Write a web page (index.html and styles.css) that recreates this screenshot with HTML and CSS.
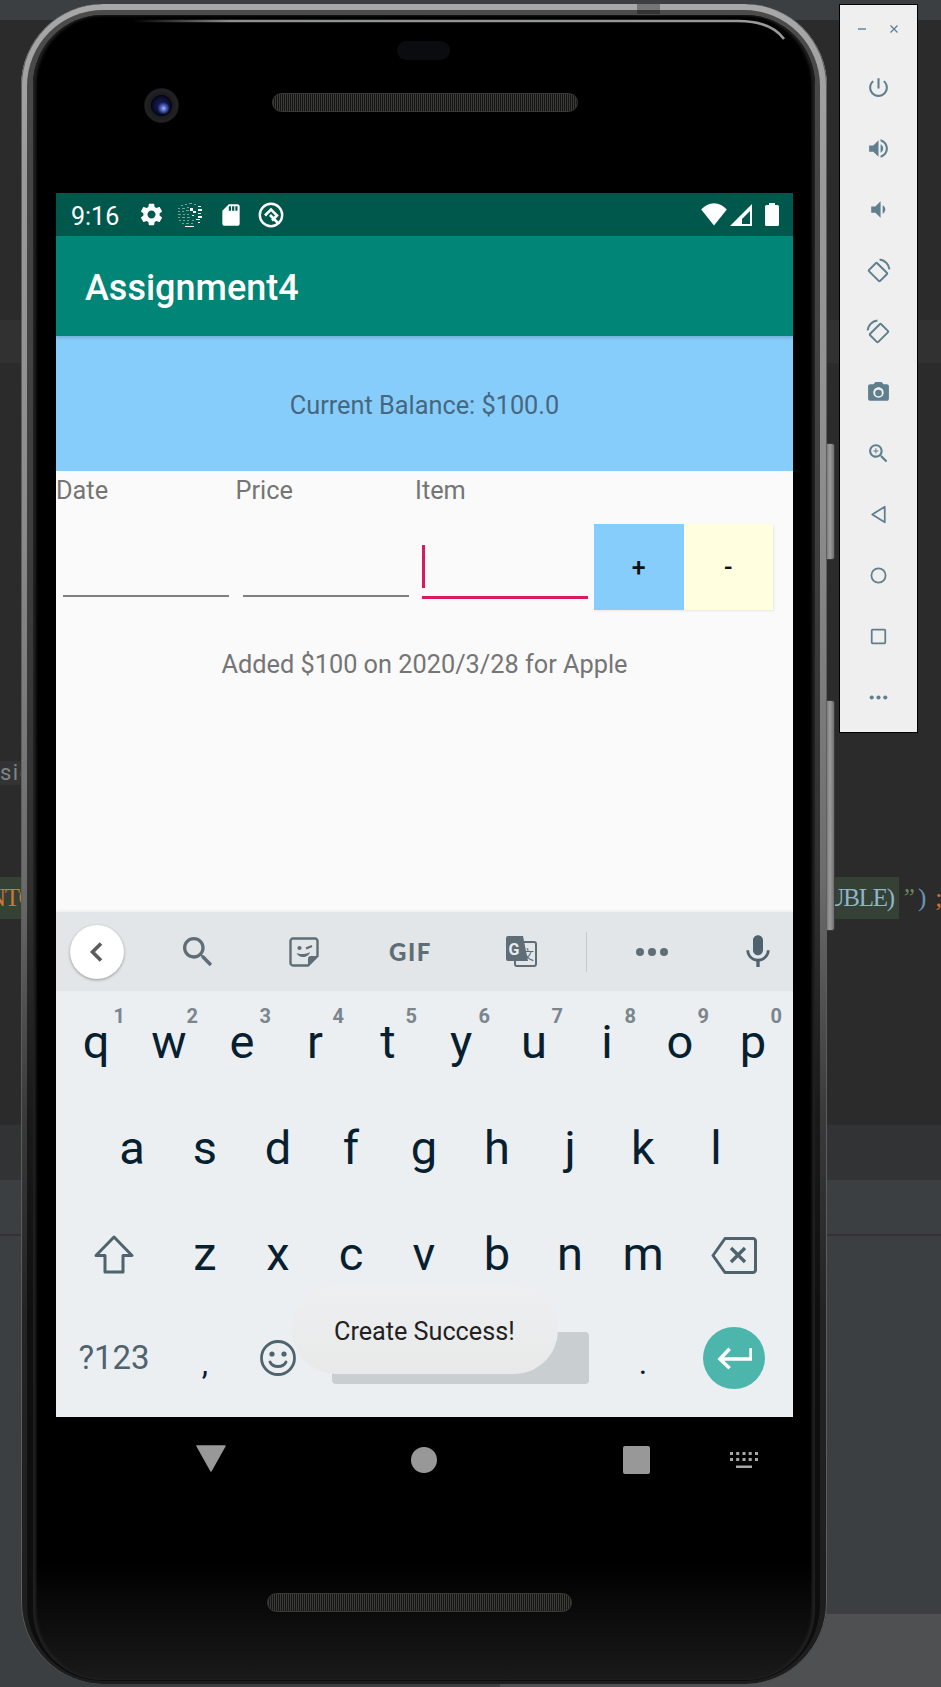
FILE: index.html
```html
<!DOCTYPE html>
<html lang="en">
<head>
<meta charset="utf-8">
<title>Assignment4</title>
<link rel="stylesheet" href="styles.css">
</head>
<body>
<div class="ide">
  <div class="band band-top"></div>
  <div class="band band-a"></div>
  <div class="band band-tabs"></div>
  <div class="band band-b"></div>
  <div class="band band-sic"><span class="sic">sic</span></div>
  <div class="band band-c"></div>
  <div class="band band-code">
    <div class="code-hl"><span class="orange left-code">NTO</span><span class="blue-code">UBLE)</span></div>
    <span class="green-code">”</span><span class="blue-code paren">)</span><span class="orange semi">;</span>
  </div>
  <div class="band band-d"></div>
  <div class="band band-e"></div>
  <div class="band band-f"></div>
  <div class="band band-line"></div>
  <div class="band band-g"></div>
  <div class="band band-h"></div>
</div>

<div class="side-btn side-btn-1"></div>
<div class="side-btn side-btn-2"></div>

<div class="device">
  <div class="rim"></div>
  <div class="notch"></div>
  <div class="face">
    <svg class="shine" viewBox="0 0 782 60" width="782" height="60"><path d="M100 6H705Q738 6 751 24" fill="none" stroke="url(#sh)" stroke-width="2.6"/><defs><linearGradient id="sh" x1="0" x2="1" y1="0" y2="0"><stop offset="0" stop-color="#888" stop-opacity="0"/><stop offset=".15" stop-color="#8e9090"/><stop offset="1" stop-color="#9a9a9a"/></linearGradient></defs></svg>
    <div class="pill"></div>
    <div class="camera"></div>
    <div class="speaker speaker-top"></div>
    <div class="speaker speaker-bottom"></div>

    <div class="screen">
      <div class="statusbar">
        <span class="time">9:16</span>
        <svg class="st-gear" viewBox="0 0 24 24"><path d="M19.14 12.94c.04-.3.06-.61.06-.94 0-.32-.02-.64-.07-.94l2.03-1.58c.18-.14.23-.41.12-.61l-1.92-3.32c-.12-.22-.37-.29-.59-.22l-2.39.96c-.5-.38-1.03-.7-1.62-.94l-.36-2.54c-.04-.24-.24-.41-.48-.41h-3.84c-.24 0-.43.17-.47.41l-.36 2.54c-.59.24-1.13.57-1.62.94l-2.39-.96c-.22-.08-.47 0-.59.22L2.74 8.87c-.12.21-.08.47.12.61l2.03 1.58c-.05.3-.09.63-.09.94s.02.64.07.94l-2.03 1.58c-.18.14-.23.41-.12.61l1.92 3.32c.12.22.37.29.59.22l2.39-.96c.5.38 1.03.7 1.62.94l.36 2.54c.05.24.24.41.48.41h3.84c.24 0 .44-.17.47-.41l.36-2.54c.59-.24 1.13-.56 1.62-.94l2.39.96c.22.08.47 0 .59-.22l1.92-3.32c.12-.22.07-.47-.12-.61l-2.01-1.58zM12 15.6c-1.98 0-3.6-1.62-3.6-3.6s1.62-3.6 3.6-3.6 3.6 1.62 3.6 3.6-1.62 3.6-3.6 3.6z"/></svg>
        <svg class="st-glitch" viewBox="0 0 26 26">
          <path opacity=".45" d="M4 3h2v1H4zM8 2h2v1H8zM12 1h3v1h-3zM17 2h2v1h-2zM1 6h2v1H1zM5 6h3v1H5zM10 5h2v1h-2zM1 9h2v1H1zM5 9h2v1H5zM9 8h3v1H9zM1 12h3v1H1zM6 12h2v1H6zM10 12h2v1h-2zM1 15h2v1H1zM5 15h3v1H5zM10 15h3v1h-3zM2 18h2v1H2zM6 18h2v1H6zM10 18h2v1h-2zM15 18h2v1h-2zM5 21h2v1H5zM9 21h3v1H9zM14 21h2v1h-2z"/>
          <path d="M13 6h3v3h-3zM16 9h3v2h-3zM21 4h3v1h-3zM21 7h4v2h-4zM21 11h3v1h-3zM21 14h4v2h-4zM15 13h2v1h-2zM19 17h4v1h-4zM8 24h9v1H8zM21 20h2v1h-2z"/>
        </svg>
        <svg class="st-sd" viewBox="0 0 24 24"><path d="M18 2h-8L4.02 8 4 20c0 1.1.9 2 2 2h12c1.1 0 2-.9 2-2V4c0-1.1-.9-2-2-2zm-6 6h-2V4h2v4zm3 0h-2V4h2v4zm3 0h-2V4h2v4z"/></svg>
        <svg class="st-q" viewBox="0 0 26 26"><circle cx="13" cy="13" r="11.2" fill="none" stroke="#fff" stroke-width="2.4"/><path d="M7 13.5L13 7.5L19 13.5L14 18.5" fill="none" stroke="#fff" stroke-width="2.6"/><path d="M12 13L20 21" stroke="#fff" stroke-width="2.6"/></svg>
        <span class="st-spacer"></span>
        <svg class="st-wifi" viewBox="0 0 26 23"><path d="M13 22.5L.2 6.5C3.6 2.6 8 .2 13 .2S22.4 2.6 25.8 6.5Z"/></svg>
        <svg class="st-signal" viewBox="0 0 22 22"><path fill-rule="evenodd" d="M0 22L22 0V22ZM12 20H20V7L12 15Z"/></svg>
        <svg class="st-batt" viewBox="0 0 14 23"><path d="M4 0H10V2H12.5A1.5 1.5 0 0 1 14 3.5V21.5A1.5 1.5 0 0 1 12.5 23H1.5A1.5 1.5 0 0 1 0 21.5V3.5A1.5 1.5 0 0 1 1.5 2H4Z"/></svg>
      </div>

      <header class="appbar">Assignment4</header>
      <div class="balance">Current Balance: $100.0</div>

      <main class="content">
        <div class="labels">
          <span class="label">Date</span><span class="label">Price</span><span class="label">Item</span>
        </div>
        <div class="form-row">
          <div class="field"></div>
          <div class="field"></div>
          <div class="field field-active"><span class="cursor"></span></div>
          <div class="buttons">
            <button class="btn btn-plus">+</button><button class="btn btn-minus">-</button>
          </div>
        </div>
        <p class="history">Added $100 on 2020/3/28 for Apple</p>
      </main>

      <div class="kb-strip">
        <span class="kb-back"><svg viewBox="0 0 24 24" class="ic-back"><path d="M16 3.5L7.5 12L16 20.5" fill="none" stroke="#5c5c5c" stroke-width="3.6"/></svg></span>
        <svg class="kb-ic ic-search" viewBox="0 0 24 24"><path d="M15.5 14h-.79l-.28-.27C15.41 12.59 16 11.11 16 9.5 16 5.91 13.09 3 9.5 3S3 5.91 3 9.5 5.91 16 9.5 16c1.61 0 3.09-.59 4.23-1.57l.27.28v.79l5 4.99L20.49 19l-4.99-5zm-6 0C7.01 14 5 11.99 5 9.5S7.01 5 9.5 5 14 7.01 14 9.5 11.99 14 9.5 14z"/></svg>
        <svg class="kb-ic ic-sticker" viewBox="0 0 30 30"><path d="M4 1.5H26A2.5 2.5 0 0 1 28.5 4V19L19 28.5H4A2.5 2.5 0 0 1 1.5 26V4A2.5 2.5 0 0 1 4 1.5Z" fill="none" stroke="#5f6e76" stroke-width="2.4"/><path d="M19 28.5V22A3 3 0 0 1 22 19H28.5Z"/><circle cx="10.5" cy="11" r="2.1"/><path d="M17 11.5L23 9" stroke="#5f6e76" stroke-width="2.4"/><path d="M7.5 16C11 17.5 17 17.5 21 15C19.5 21 10 22 7.5 16Z"/></svg>
        <span class="gif">GIF</span>
        <svg class="kb-ic ic-translate" viewBox="0 0 31 31"><rect x="9" y="6" width="21" height="24" rx="2" fill="#e2e6e9" stroke="#5f6e76" stroke-width="2"/><path d="M2 0H17L22 25H2A2 2 0 0 1 0 23V2A2 2 0 0 1 2 0Z"/><text x="2.5" y="19" class="tr-g">G</text><text x="15" y="23" class="tr-x">文</text></svg>
        <span class="kb-div"></span>
        <span class="dots"><i></i><i></i><i></i></span>
        <svg class="kb-ic ic-mic" viewBox="0 0 24 24"><path d="M12 14c1.66 0 3-1.34 3-3V5c0-1.66-1.34-3-3-3S9 3.34 9 5v6c0 1.66 1.34 3 3 3zm5.3-3c0 3-2.54 5.1-5.3 5.1S6.7 14 6.7 11H5c0 3.41 2.72 6.23 6 6.72V21h2v-3.28c3.28-.48 6-3.3 6-6.72h-1.7z"/></svg>
      </div>

      <div class="keyboard">
        <div class="kb-row kb-row-1">
          <span class="key">q<sup class="hint">1</sup></span><span class="key">w<sup class="hint">2</sup></span><span class="key">e<sup class="hint">3</sup></span><span class="key">r<sup class="hint">4</sup></span><span class="key">t<sup class="hint">5</sup></span><span class="key">y<sup class="hint">6</sup></span><span class="key">u<sup class="hint">7</sup></span><span class="key">i<sup class="hint">8</sup></span><span class="key">o<sup class="hint">9</sup></span><span class="key">p<sup class="hint">0</sup></span>
        </div>
        <div class="kb-row kb-row-2">
          <span class="key">a</span><span class="key">s</span><span class="key">d</span><span class="key">f</span><span class="key">g</span><span class="key">h</span><span class="key">j</span><span class="key">k</span><span class="key">l</span>
        </div>
        <div class="kb-row">
          <span class="key key-wide"><svg class="ic-shift" viewBox="0 0 42 40"><path d="M21 2L39 20.5H30V37H12V20.5H3Z" fill="none" stroke="#4f636e" stroke-width="3" stroke-linejoin="round"/></svg></span>
          <span class="key">z</span><span class="key">x</span><span class="key">c</span><span class="key">v</span><span class="key">b</span><span class="key">n</span><span class="key">m</span>
          <span class="key key-wide"><svg class="ic-bksp" viewBox="0 0 46 37"><path d="M14 1.5H42A2.5 2.5 0 0 1 44.5 4V33A2.5 2.5 0 0 1 42 35.5H14L2 18.5Z" fill="none" stroke="#4f636e" stroke-width="3" stroke-linejoin="round"/><path d="M20 11L34 25M34 11L20 25" stroke="#4f636e" stroke-width="3.4"/></svg></span>
        </div>
        <div class="kb-row kb-row-4">
          <span class="key key-wide key-sym">?123</span>
          <span class="key key-punct">,</span>
          <span class="key key-flat"><svg class="ic-emoji" viewBox="0 0 36 36"><circle cx="18" cy="18" r="16.5" fill="none" stroke="#4f636e" stroke-width="2.8"/><circle cx="12" cy="14" r="2.6" fill="#4f636e"/><circle cx="24" cy="14" r="2.6" fill="#4f636e"/><path d="M10 22C13 28 23 28 26 22" fill="none" stroke="#4f636e" stroke-width="2.8" stroke-linecap="round"/></svg></span>
          <span class="key key-space"><i class="spacebar"></i></span>
          <span class="key key-punct">.</span>
          <span class="key key-wide key-flat"><span class="enter"><svg class="ic-enter" viewBox="0 0 36 24"><path d="M35 2V13H4M13 2.500L3 13L13 22.500" fill="none" stroke="#fff" stroke-width="3.600"/></svg></span></span>
        </div>
      </div>

      <div class="toast">Create Success!</div>
    </div>

    <nav class="navbar">
      <svg class="nav-back" viewBox="0 0 30 27"><path d="M1 1H29L15 26Z" stroke="#989898" stroke-width="1.500" stroke-linejoin="round"/></svg>
      <span class="nav-home"></span>
      <span class="nav-recent"></span>
      <svg class="nav-kb" viewBox="0 0 28 16"><path d="M0 0h3v3H0zM6.200 0h3v3h-3zM12.500 0h3v3h-3zM18.700 0h3v3h-3zM25 0h3v3h-3zM0 6h3v3H0zM6.200 6h3v3h-3zM12.500 6h3v3h-3zM18.700 6h3v3h-3zM25 6h3v3h-3zM6 13.500h16V16H6z"/></svg>
    </nav>
  </div>
</div>

<aside class="toolbar">
  <div class="win-ctl"><span class="win-min"></span><svg class="win-x" viewBox="0 0 10 10"><path d="M1.500 1.500L8.500 8.500M8.500 1.500L1.500 8.500" stroke="#5f7f8f" stroke-width="1.300"/></svg></div>
  <div class="tool"><svg viewBox="0 0 24 24"><path d="M13 3h-2v10h2V3zm4.830 2.170l-1.420 1.420C17.990 7.860 19 9.810 19 12c0 3.870-3.130 7-7 7s-7-3.130-7-7c0-2.190 1.010-4.140 2.580-5.420L6.170 5.170C4.230 6.820 3 9.260 3 12c0 4.970 4.030 9 9 9s9-4.030 9-9c0-2.740-1.230-5.180-3.170-6.830z"/></svg></div>
  <div class="tool"><svg viewBox="0 0 24 24"><path d="M3 9v6h4l5 5V4L7 9H3zm13.500 3c0-1.770-1.020-3.290-2.500-4.030v8.050c1.480-.73 2.500-2.250 2.500-4.020zM14 3.230v2.060c2.890.86 5 3.540 5 6.710s-2.110 5.850-5 6.710v2.060c4.010-.91 7-4.490 7-8.770s-2.990-7.860-7-8.770z"/></svg></div>
  <div class="tool"><svg viewBox="0 0 24 24"><path d="M18.500 12c0-1.770-1.020-3.290-2.500-4.030v8.050c1.480-.73 2.500-2.250 2.500-4.020zM5 9v6h4l5 5V4L9 9H5z"/></svg></div>
  <div class="tool"><svg viewBox="0 0 24 24"><g fill="none" stroke="#5f7f8f" stroke-width="1.900"><rect x="6" y="6" width="11" height="15" rx="1" transform="rotate(-45 11.500 13.500)"/><path d="M13 1.500A10.500 10.500 0 0 1 22.500 11"/></g></svg></div>
  <div class="tool"><svg viewBox="0 0 24 24"><g fill="none" stroke="#5f7f8f" stroke-width="1.900"><rect x="7" y="6" width="11" height="15" rx="1" transform="rotate(45 12.500 13.500)"/><path d="M1.500 11A10.500 10.500 0 0 1 11 1.500"/></g></svg></div>
  <div class="tool"><svg viewBox="0 0 24 24"><circle cx="12" cy="12.500" r="3.200"/><path d="M9 2L7.170 4H4c-1.100 0-2 .9-2 2v12c0 1.100.9 2 2 2h16c1.100 0 2-.9 2-2V6c0-1.100-.9-2-2-2h-3.170L15 2H9zm3 15c-2.760 0-5-2.240-5-5s2.240-5 5-5 5 2.240 5 5-2.240 5-5 5z"/></svg></div>
  <div class="tool"><svg viewBox="0 0 24 24"><path d="M15.500 14h-.79l-.28-.27C15.410 12.590 16 11.110 16 9.500 16 5.910 13.090 3 9.500 3S3 5.910 3 9.500 5.910 16 9.500 16c1.610 0 3.090-.59 4.230-1.570l.27.28v.79l5 4.990L20.490 19l-4.990-5zm-6 0C7.010 14 5 11.990 5 9.500S7.010 5 9.500 5 14 7.010 14 9.500 11.990 14 9.500 14z"/><path d="M12 10h-2v2H9v-2H7V9h2V7h1v2h2v1z"/></svg></div>
  <div class="tool"><svg viewBox="0 0 24 24"><path d="M18 4.500V19.500L6 12Z" fill="none" stroke="#5f7f8f" stroke-width="1.700" stroke-linejoin="round"/></svg></div>
  <div class="tool"><svg viewBox="0 0 24 24"><circle cx="12" cy="12" r="6.800" fill="none" stroke="#5f7f8f" stroke-width="1.700"/></svg></div>
  <div class="tool"><svg viewBox="0 0 24 24"><rect x="5.500" y="5.500" width="13" height="13" rx=".8" fill="none" stroke="#5f7f8f" stroke-width="1.700"/></svg></div>
  <div class="tool"><svg viewBox="0 0 24 24"><circle cx="5.500" cy="12" r="2"/><circle cx="12" cy="12" r="2"/><circle cx="18.500" cy="12" r="2"/></svg></div>
</aside>
</body>
</html>
```
FILE: styles.css
```css
* { box-sizing: border-box; }
html, body { margin: 0; padding: 0; }
body {
  position: relative;
  width: 941px;
  height: 1687px;
  overflow: hidden;
  background: #2b2b2b;
  font-family: Roboto, "Liberation Sans", sans-serif;
}

/* IDE behind the emulator */
.ide { display: flex; flex-direction: column; height: 1687px; }
.band { flex: none; width: 100%; }
.band-top { height: 20px; background: #3c3f41; }
.band-a { height: 300px; background: #2b2b2b; }
.band-tabs { height: 43px; background: #313131; }
.band-b { height: 398px; background: #2b2b2b; }
.band-sic { height: 24px; background: #2b2b2b; }
.sic { display: block; width: 30px; height: 24px; background: #333; color: #7f8488; font: 22px/24px Roboto, sans-serif; letter-spacing: 1.500px; }
.band-c { height: 92px; background: #2b2b2b; }
.band-code { height: 42px; background: #2b2b2b; display: flex; align-items: center; font: 25px/42px "Liberation Serif", serif; }
.code-hl { flex: none; width: 899px; height: 42px; background: #344134; display: flex; justify-content: space-between; padding-right: 5px; letter-spacing: -1.200px; }
.orange { color: #cc7832; }
.left-code { margin-left: -12px; }
.blue-code { color: #8fb4cc; }
.green-code { color: #6a8759; margin-left: 2px; font-style: italic; }
.paren { margin-left: 3px; color: #6897bb; }
.semi { margin-left: 9px; }
.band-d { height: 206px; background: #2b2b2b; }
.band-e { height: 55px; background: #313335; }
.band-f { height: 54px; background: #3c3f41; }
.band-line { height: 2px; background: #323232; }
.band-g { height: 378px; background: #3c3f41; }
.band-h { height: 73px; background: linear-gradient(90deg, #3c3f41 0 500px, #4e5052 500px); }

/* Device */
.side-btn { position: absolute; left: 825px; width: 10px; border-radius: 0 3px 3px 0; background: linear-gradient(90deg, #666, #9c9c9c 55%, #6f6f6f); border: 1px solid #3a3a3a; border-left: 0; }
.side-btn-1 { top: 443px; height: 117px; }
.side-btn-2 { top: 700px; height: 231px; }

.device {
  position: absolute;
  left: 21px;
  top: 4px;
  width: 806px;
  height: 1680px;
  border-radius: 82px;
  background: linear-gradient(180deg, #a8a8a8 0, #9a9a9a 10%, #8c8c8c 30%, #6c6c6c 52%, #3a3a3a 66%, #232323 78%, #1d1d1d 100%);
  box-shadow: inset 1px 0 #5e5e5e, inset -1px 0 #5e5e5e;
}
.rim { position: absolute; inset: 6px 7px 3px 6px; border-radius: 76px; background: rgba(0, 0, 0, .55); }
.notch { position: absolute; left: 616px; top: 0; width: 23px; height: 10px; background: rgba(0, 0, 0, .3); }
.face {
  position: absolute;
  inset: 11px 12px 4px 12px;
  border-radius: 70px;
  padding: 178px 22px 0 23px;
  background: linear-gradient(180deg, #000 0, #000 93%, #1a1a1a 100%);
  box-shadow: inset 3px 0 3px #222, inset -3px 0 3px #222;
}
.shine { position: absolute; left: 0; top: 0; width: 782px; height: 60px; }
.pill { position: absolute; left: 364px; top: 26px; width: 53px; height: 19px; border-radius: 10px; background: #0b0c10; }
.camera {
  position: absolute; left: 111px; top: 73px; width: 35px; height: 35px; border-radius: 50%;
  background:
    radial-gradient(circle closest-side at 56% 58%, #a9bdf2 0, #5670cc 16%, rgba(40, 55, 140, 0) 42%),
    radial-gradient(circle closest-side, #1a2260 0, #0b0f33 45%, #04050f 58%, #1b1b1d 62%, #232325 92%, #111 100%);
}
.speaker {
  position: absolute; height: 19px; border-radius: 10px; border: 1px solid #38383a;
  background: repeating-linear-gradient(90deg, #3c3c36 0 1px, #151515 1px 2px);
}
.speaker-top { left: 239px; top: 78px; width: 306px; }
.speaker-bottom { left: 234px; top: 1578px; width: 305px; }

/* Android screen */
.screen {
  position: relative;
  width: 737px;
  height: 1224px;
  display: flex;
  flex-direction: column;
  background: #fafafa;
  overflow: hidden;
}
.statusbar { flex: none; height: 43px; display: flex; align-items: center; padding: 0 14px 0 15px; background: #00574b; color: #fff; fill: #fff; }
.time { font-size: 25px; width: 47px; margin-right: 20px; padding-top: 3px; }
.st-gear { width: 27px; height: 27px; }
.st-glitch { width: 26px; height: 26px; margin-left: 12px; }
.st-sd { width: 26px; height: 26px; margin-left: 15px; }
.st-q { width: 26px; height: 26px; margin-left: 14px; }
.st-spacer { flex: 1; }
.st-wifi { width: 26px; height: 23px; }
.st-signal { width: 22px; height: 22px; margin-left: 3px; }
.st-batt { width: 14px; height: 23px; margin-left: 13px; }

.appbar { flex: none; height: 100px; display: flex; align-items: center; padding: 4px 0 0 29px; background: #008577; color: #fff; font-size: 36px; font-weight: 500; position: relative; box-shadow: 0 2px 3px rgba(0,0,0,.15); z-index: 1; }
.balance { flex: none; height: 135px; padding-top: 4px; display: flex; align-items: center; justify-content: center; background: #87cdfb; color: #46677e; font-size: 25.300px; }

.content { flex: 1; display: flex; flex-direction: column; min-height: 0; }
.labels { display: flex; height: 53px; padding: 5px 0 0; color: #757575; font-size: 25.300px; line-height: 30px; }
.label { width: 179.500px; }
.form-row { display: flex; height: 87px; padding-left: 7px; }
.field { position: relative; width: 166px; height: 73px; margin-right: 13.500px; border-bottom: 2px solid #808080; }
.field-active { border-bottom: 3px solid #d81b60; margin-right: 6px; height: 75px; }
.cursor { position: absolute; left: 0; top: 21px; width: 3px; height: 43px; background: #d81b60; }
.buttons { display: flex; box-shadow: 1px 1px 2px rgba(0,0,0,.08); height: 86px; }
.btn { width: 89.500px; height: 86px; border: 0; padding: 0; font: 500 25px Roboto, sans-serif; color: #111; }
.btn-plus { background: #87cdfb; }
.btn-minus { background: #ffffe0; }
.history { margin: 39px 0 0; text-align: center; color: #757575; font-size: 25.300px; line-height: 30px; }

.kb-strip { flex: none; height: 79px; position: relative; display: flex; align-items: center; background: #e2e6e9; fill: #5f6e76; box-shadow: 0 -1px 3px rgba(0,0,0,.06); }
.kb-back { flex: none; width: 54px; height: 54px; margin-left: 14px; border-radius: 50%; background: #fff; box-shadow: 0 1px 3px rgba(0,0,0,.35); display: flex; align-items: center; justify-content: center; }
.ic-back { width: 24px; height: 24px; }
.kb-ic { flex: none; }
.ic-search { width: 40px; height: 40px; margin-left: 54px; }
.ic-sticker { width: 30px; height: 30px; margin-left: 71px; }
.gif { flex: none; width: 44px; margin-left: 70px; color: #5f6e76; font: 900 24px/1 Lato, Roboto, sans-serif; letter-spacing: 1.600px; }
.ic-translate { width: 31px; height: 31px; margin-left: 72.500px; }
.tr-g { fill: #e9ecef; font: 700 16px Roboto, sans-serif; }
.tr-x { fill: #5f6e76; font: 400 13px "Noto Sans CJK SC", sans-serif; }
.kb-div { flex: none; width: 1px; height: 40px; margin-left: 49.500px; background: #c5cbcf; }
.dots { flex: none; display: flex; gap: 4px; margin-left: 49px; }
.dots i { width: 8px; height: 8px; border-radius: 50%; background: #5f6e76; }
.ic-mic { width: 40px; height: 40px; margin-left: 70px; fill: #4f636e; }

.keyboard { flex: none; height: 426px; background: #ebeff2; color: #07202f; display: flex; flex-direction: column; }
.kb-row { flex: none; height: 106px; display: flex; align-items: center; padding-left: 3.500px; }
.kb-row-2 { padding-left: 39.500px; }
.kb-row-4 { height: 97px; }
.key { position: relative; flex: none; width: 73px; height: 100%; padding-bottom: 6px; display: flex; align-items: center; justify-content: center; font-size: 47px; line-height: 1; }
.key-wide { width: 109px; padding-bottom: 3px; }
.key-flat { padding-bottom: 0; }
.hint { position: absolute; left: 54px; top: 13px; font-size: 20px; line-height: 24px; font-weight: 700; color: #7b868c; vertical-align: baseline; }
.ic-shift { width: 42px; height: 40px; }
.ic-bksp { width: 46px; height: 37px; margin-top: 2px; }
.key-sym { font-size: 33px; color: #4f636e; padding-bottom: 0; }
.key-punct { font-size: 32px; padding-top: 10px; padding-bottom: 0; }
.ic-emoji { width: 36px; height: 36px; }
.key-space { width: 292px; padding-bottom: 0; }
.spacebar { width: 257px; height: 52px; border-radius: 4px; background: #c9ced1; }
.enter { width: 62px; height: 62px; border-radius: 50%; background: #4db6ac; display: flex; align-items: center; justify-content: center; }
.ic-enter { width: 35px; height: 24px; }

.toast {
  position: absolute; left: 236px; top: 1092px; width: 266px; height: 89px;
  border-radius: 44px; padding: 4px 0 0 42px;
  display: flex; align-items: center;
  background: linear-gradient(180deg, #edeff0 0, #e9e9e9 100%); color: #212121; font-size: 25.200px;
  z-index: 2;
}

.navbar { position: relative; height: 86px; }
.nav-back, .nav-home, .nav-recent, .nav-kb { position: absolute; }
.nav-back { left: 140px; top: 28px; width: 30px; height: 27px; fill: #989898; }
.nav-home { left: 355px; top: 30px; width: 26px; height: 26px; border-radius: 50%; background: #989898; }
.nav-recent { left: 567px; top: 29px; width: 27px; height: 28px; border-radius: 2px; background: #989898; }
.nav-kb { left: 674px; top: 35px; width: 28px; height: 16px; fill: #a8a8a8; }

/* Emulator toolbar */
.toolbar {
  position: absolute; left: 839px; top: 4px; width: 79px; height: 729px;
  background: #efefef; border: 1px solid #000;
  display: flex; flex-direction: column; fill: #5f7f8f;
}
.win-ctl { flex: none; height: 52px; display: flex; align-items: center; justify-content: center; gap: 23px; padding-bottom: 4px; }
.win-min { width: 8px; height: 2px; background: #8aa0ac; }
.win-x { width: 10px; height: 10px; }
.tool { flex: none; height: 61px; display: flex; align-items: center; justify-content: center; }
.tool svg { width: 25px; height: 25px; }
```
